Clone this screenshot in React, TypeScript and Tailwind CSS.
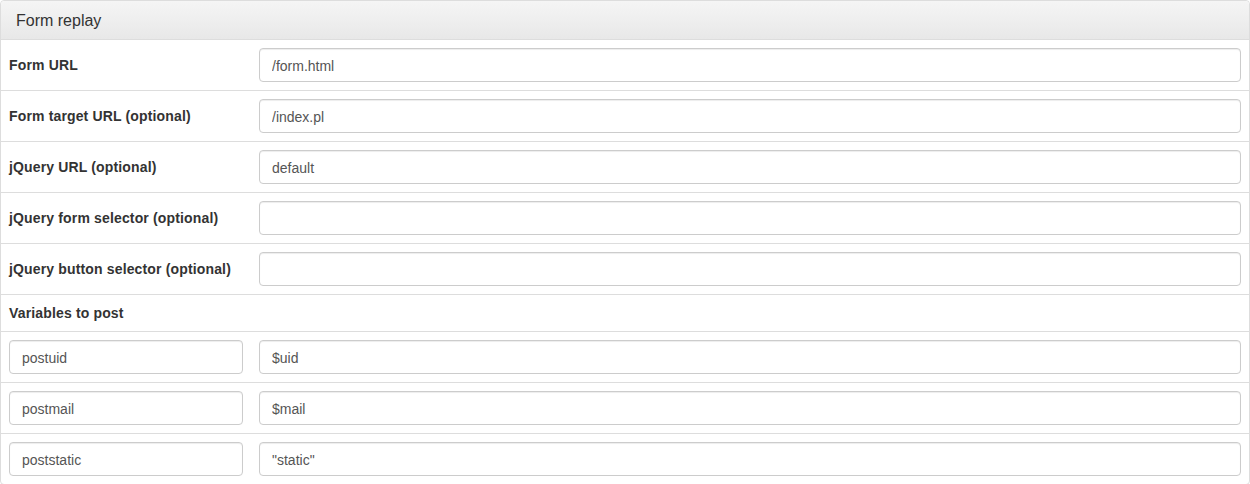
const fields = [
  { label: 'Form URL', value: '/form.html' },
  { label: 'Form target URL (optional)', value: '/index.pl' },
  { label: 'jQuery URL (optional)', value: 'default' },
  { label: 'jQuery form selector (optional)', value: '' },
  { label: 'jQuery button selector (optional)', value: '' },
];

const variables = [
  { name: 'postuid', value: '$uid' },
  { name: 'postmail', value: '$mail' },
  { name: 'poststatic', value: '"static"' },
];

const inputCls =
  'block w-full h-[34px] px-3 pt-[7px] pb-[5px] leading-5 text-sm text-[#555] bg-white border border-[#ccc] rounded shadow-[inset_0_1px_1px_rgba(0,0,0,0.075)] outline-none';

export default function App() {
  return (
    <div className="min-h-screen bg-white font-['Liberation_Sans',Arial,sans-serif] text-sm text-[#333]">
      <div className="border border-[#ddd] rounded bg-white">
        <div className="h-[39px] pt-[11px] px-[15px] border-b border-[#ddd] rounded-t bg-gradient-to-b from-[#f5f5f5] to-[#e8e8e8]">
          <h3 className="text-base leading-[1.1] text-[#333]">Form replay</h3>
        </div>
        <div>
          {fields.map((f, i) => (
            <div
              key={f.label}
              className={`flex items-center ${i > 0 ? 'border-t border-[#ddd] h-[51px]' : 'h-[50px]'}`}
            >
              <div className="w-[250px] shrink-0 px-2 font-bold tracking-[0.15px]">{f.label}</div>
              <div className="flex-1 px-2">
                <input className={inputCls} defaultValue={f.value} />
              </div>
            </div>
          ))}
          <div className="flex items-center h-[37px] border-t border-[#ddd]">
            <div className="px-2 font-bold tracking-[0.15px]">Variables to post</div>
          </div>
          {variables.map((v) => (
            <div key={v.name} className="flex items-center h-[51px] border-t border-[#ddd]">
              <div className="w-[250px] shrink-0 px-2">
                <input className={inputCls} defaultValue={v.name} />
              </div>
              <div className="flex-1 px-2">
                <input className={inputCls} defaultValue={v.value} />
              </div>
            </div>
          ))}
        </div>
      </div>
    </div>
  );
}
